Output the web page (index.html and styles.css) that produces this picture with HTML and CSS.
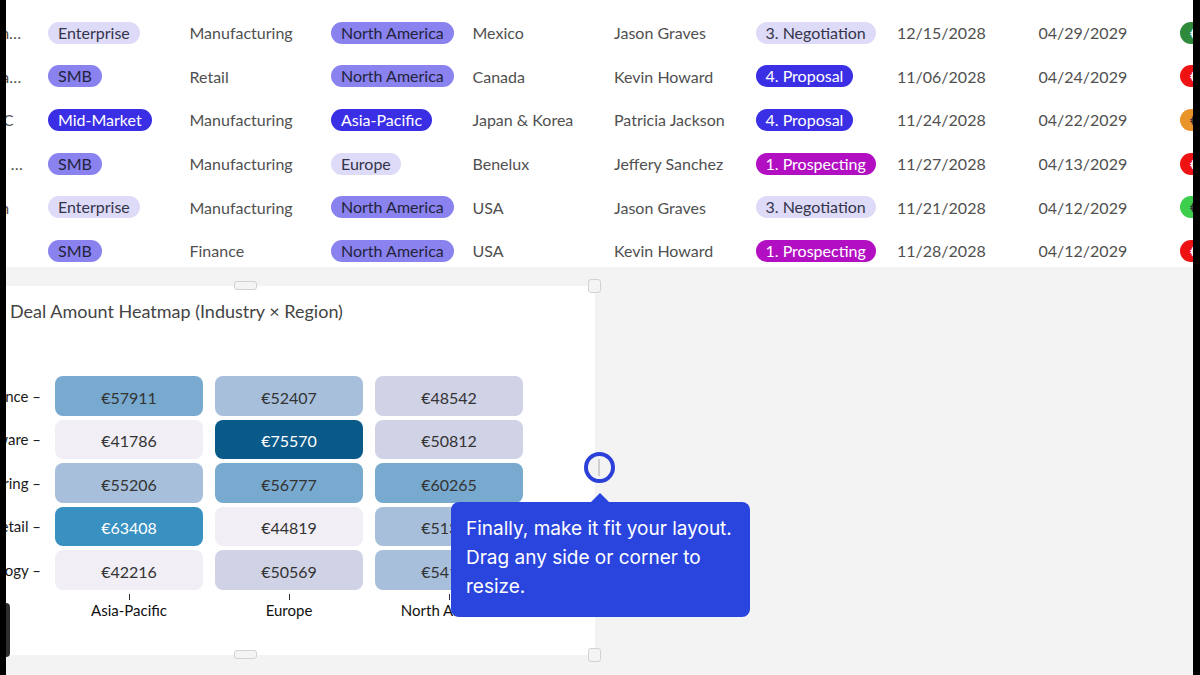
FILE: index.html
```html
<!DOCTYPE html>
<html lang="en">
<head>
    <meta charset="UTF-8">
    <meta name="viewport" content="width=device-width, initial-scale=1.0">
    <title>Deals Dashboard</title>
    <link rel="stylesheet" href="styles.css">
</head>
<body>
    <div class="screen">
        <div class="edge edge-left"><div class="edge-knob"></div></div>
        <main class="app">
            <!-- Deals table (scrolled to the right) -->
            <section class="deals">
                <div class="deal-row">
                    <span class="cell-name">Bright Horizons Group</span>
                    <span class="pill tone-light">Enterprise</span>
                    <span>Manufacturing</span>
                    <span class="pill tone-mid">North America</span>
                    <span>Mexico</span>
                    <span>Jason Graves</span>
                    <span class="pill tone-light">3. Negotiation</span>
                    <span>12/15/2028</span>
                    <span>04/29/2029</span>
                    <span class="pill status-dark-green">€48,200</span>
                </div>
                <div class="deal-row">
                    <span class="cell-name">Bluepeak Art and Media</span>
                    <span class="pill tone-mid">SMB</span>
                    <span>Retail</span>
                    <span class="pill tone-mid">North America</span>
                    <span>Canada</span>
                    <span>Kevin Howard</span>
                    <span class="pill tone-deep">4. Proposal</span>
                    <span>11/06/2028</span>
                    <span>04/24/2029</span>
                    <span class="pill status-red">€12,900</span>
                </div>
                <div class="deal-row">
                    <span class="cell-name">Orion Tech LLC</span>
                    <span class="pill tone-deep">Mid-Market</span>
                    <span>Manufacturing</span>
                    <span class="pill tone-deep">Asia-Pacific</span>
                    <span>Japan &amp; Korea</span>
                    <span>Patricia Jackson</span>
                    <span class="pill tone-deep">4. Proposal</span>
                    <span>11/24/2028</span>
                    <span>04/22/2029</span>
                    <span class="pill status-orange">€33,400</span>
                </div>
                <div class="deal-row">
                    <span class="cell-name">Silverlines Rail Group</span>
                    <span class="pill tone-mid">SMB</span>
                    <span>Manufacturing</span>
                    <span class="pill tone-light">Europe</span>
                    <span>Benelux</span>
                    <span>Jeffery Sanchez</span>
                    <span class="pill tone-magenta">1. Prospecting</span>
                    <span>11/27/2028</span>
                    <span>04/13/2029</span>
                    <span class="pill status-red">€9,750</span>
                </div>
                <div class="deal-row">
                    <span class="cell-name">Bright Horizon</span>
                    <span class="pill tone-light">Enterprise</span>
                    <span>Manufacturing</span>
                    <span class="pill tone-mid">North America</span>
                    <span>USA</span>
                    <span>Jason Graves</span>
                    <span class="pill tone-light">3. Negotiation</span>
                    <span>11/21/2028</span>
                    <span>04/12/2029</span>
                    <span class="pill status-green">€61,300</span>
                </div>
                <div class="deal-row">
                    <span class="cell-name">Nova Labs</span>
                    <span class="pill tone-mid">SMB</span>
                    <span>Finance</span>
                    <span class="pill tone-mid">North America</span>
                    <span>USA</span>
                    <span>Kevin Howard</span>
                    <span class="pill tone-magenta">1. Prospecting</span>
                    <span>11/28/2028</span>
                    <span>04/12/2029</span>
                    <span class="pill status-red">€7,100</span>
                </div>
            </section>

            <!-- Widget board -->
            <section class="board">
                <div class="widget">
                    <h2 class="widget-title">Deal Amount Heatmap (Industry × Region)</h2>
                    <div class="heatmap">
                        <span class="y-label">Finance –</span>
                        <span class="heat" style="background:#78aad0">€57911</span>
                        <span class="heat" style="background:#a7bfdb">€52407</span>
                        <span class="heat" style="background:#d0d2e6">€48542</span>

                        <span class="y-label">Software –</span>
                        <span class="heat" style="background:#f1eef6">€41786</span>
                        <span class="heat heat-dark" style="background:#0a5a89">€75570</span>
                        <span class="heat" style="background:#d0d2e6">€50812</span>

                        <span class="y-label">Engineering –</span>
                        <span class="heat" style="background:#a7bfdb">€55206</span>
                        <span class="heat" style="background:#78aad0">€56777</span>
                        <span class="heat" style="background:#78aad0">€60265</span>

                        <span class="y-label">Retail –</span>
                        <span class="heat heat-dark" style="background:#3891c1">€63408</span>
                        <span class="heat" style="background:#f1eef6">€44819</span>
                        <span class="heat" style="background:#a7bfdb">€51327</span>

                        <span class="y-label">Technology –</span>
                        <span class="heat" style="background:#f1eef6">€42216</span>
                        <span class="heat" style="background:#d0d2e6">€50569</span>
                        <span class="heat" style="background:#a7bfdb">€54193</span>

                        <span></span>
                        <span class="x-label">Asia-Pacific</span>
                        <span class="x-label">Europe</span>
                        <span class="x-label">North America</span>
                    </div>

                    <!-- resize handles -->
                    <span class="handle handle-top"></span>
                    <span class="handle handle-bottom"></span>
                    <span class="handle corner corner-top"></span>
                    <span class="handle corner corner-bottom"></span>
                    <span class="focus-ring"></span>

                    <div class="coach">Finally, make it fit your layout. Drag any side or corner to resize.</div>
                </div>
            </section>
        </main>
        <div class="edge edge-right"></div>
    </div>
</body>
</html>
```

FILE: styles.css
```css
body {
    margin: 0;
    background: #f3f3f3;
    font-family: Lato, "Noto Sans", sans-serif;
    overflow: hidden;
}
.screen {
    display: flex;
    width: 1200px;
    height: 675px;
}
.edge {
    flex: none;
    background: #000;
    position: relative;
    z-index: 3;
}
.edge-left {
    width: 6px;
}
.edge-right {
    width: 7px;
}
.edge-knob {
    position: absolute;
    left: 6px;
    top: 603px;
    width: 4px;
    height: 54px;
    background: #2e2e2e;
    border-radius: 0 4px 4px 0;
}
.app {
    flex: 1;
    min-width: 0;
    overflow: hidden;
}

/* deals table */
.deals {
    background: #fff;
    height: 267px;
    padding-top: 11px;
    box-sizing: border-box;
    overflow: hidden;
}
.deal-row {
    display: grid;
    grid-template-columns: repeat(10, 141.5px);
    height: 43.6px;
    align-items: center;
    margin-left: -99.5px;
    font-size: 16px;
    color: #505050;
    white-space: nowrap;
}
.cell-name {
    overflow: hidden;
    text-overflow: ellipsis;
    padding-right: 20px;
}
.pill {
    justify-self: start;
    height: 22px;
    line-height: 22px;
    padding: 0 10px;
    border-radius: 11px;
}
.tone-light {
    background: #dddbf8;
    color: #34344a;
}
.tone-mid {
    background: #8a83ef;
    color: #23233c;
}
.tone-deep {
    background: #3b2fe5;
    color: #fff;
}
.tone-magenta {
    background: #b20fc3;
    color: #fff;
}
.status-dark-green {
    background: #2f8a3b;
    color: #fff;
}
.status-red {
    background: #ee1212;
    color: #fff;
}
.status-orange {
    background: #e8942b;
    color: #333;
}
.status-green {
    background: #3dce4e;
    color: #333;
}

/* board + widget */
.board {
    padding-top: 19px;
}
.widget {
    position: relative;
    width: 589px;
    height: 369px;
    background: #fff;
    box-sizing: border-box;
    padding-top: 13px;
}
.widget-title {
    margin: 0;
    padding-left: 4px;
    font-size: 18px;
    font-weight: 400;
    line-height: 24px;
    color: #444;
}
.heatmap {
    display: grid;
    grid-template-columns: 37px repeat(3, 148px);
    grid-template-rows: repeat(5, 39.5px) auto;
    column-gap: 12px;
    row-gap: 4px;
    margin-top: 53px;
}
.y-label {
    display: flex;
    justify-content: flex-end;
    align-items: center;
    padding-right: 2px;
    font-size: 15px;
    color: #1a1a1a;
    white-space: nowrap;
}
.heat {
    display: flex;
    align-items: center;
    justify-content: center;
    padding-top: 3px;
    border-radius: 8px;
    font-size: 16px;
    color: #333;
}
.heat-dark {
    color: #fff;
}
.x-label {
    display: flex;
    flex-direction: column;
    align-items: center;
    font-size: 15px;
    line-height: 17px;
    color: #111;
}
.x-label::before {
    content: "";
    width: 1px;
    height: 6px;
    margin-bottom: 2px;
    background: #333;
}

.handle {
    position: absolute;
    box-sizing: border-box;
    background: #f4f4f4;
    border: 1px solid #d2d2d2;
    border-radius: 3px;
}
.handle-top,
.handle-bottom {
    left: 228px;
    width: 23px;
    height: 9px;
}
.handle-top {
    top: -5px;
}
.handle-bottom {
    top: 364px;
}
.corner {
    left: 582px;
    width: 13px;
    height: 14px;
}
.corner-top {
    top: -7px;
}
.corner-bottom {
    top: 362px;
}
.focus-ring {
    position: absolute;
    left: 578px;
    top: 166px;
    width: 31px;
    height: 31px;
    box-sizing: border-box;
    border: 4px solid #2b40d8;
    border-radius: 50%;
    background: #f3f3f3;
}
.focus-ring::after {
    content: "";
    position: absolute;
    left: 10px;
    top: 3px;
    width: 2px;
    height: 17px;
    background: #cfcfcf;
}

/* coach mark */
.coach {
    position: absolute;
    left: 445px;
    top: 216px;
    width: 299px;
    box-sizing: border-box;
    padding: 12px 14px 16px 15px;
    background: #2a45de;
    color: #fff;
    border-radius: 8px;
    font-family: Inter, "Noto Sans", sans-serif;
    font-size: 19px;
    line-height: 29px;
}
.coach::before {
    content: "";
    position: absolute;
    top: -9px;
    left: 139px;
    border-left: 10px solid transparent;
    border-right: 10px solid transparent;
    border-bottom: 10px solid #2a45de;
}
```
